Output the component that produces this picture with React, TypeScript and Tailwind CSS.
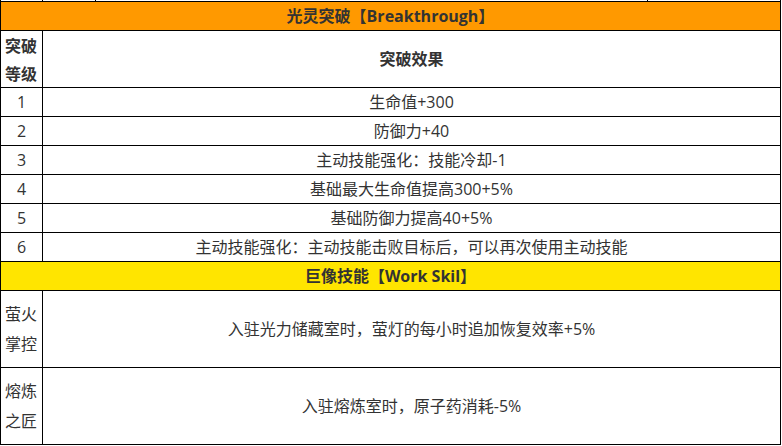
import React from 'react';

const font = { fontFamily: '"Open Sans", "Noto Sans CJK SC", sans-serif' };

const levels = [
  ['1', '生命值+300'],
  ['2', '防御力+40'],
  ['3', '主动技能强化：技能冷却-1'],
  ['4', '基础最大生命值提高300+5%'],
  ['5', '基础防御力提高40+5%'],
  ['6', '主动技能强化：主动技能击败目标后，可以再次使用主动技能'],
];

const skills = [
  ['萤火', '掌控', '入驻光力储藏室时，萤灯的每小时追加恢复效率+5%'],
  ['熔炼', '之匠', '入驻熔炼室时，原子药消耗-5%'],
];

export default function App() {
  return (
    <div className="w-[782px] h-[446px] bg-white text-[16px] text-[#333]" style={font}>
      {/* tail of the table above */}
      <div className="flex h-px">
        <div className="w-[42px] border-l border-black" />
        <div className="w-[53px] border-l border-black" />
        <div className="w-[552px] border-l border-black" />
        <div className="w-[134px] border-l border-r border-black" />
      </div>

      <div className="w-[781px] border border-black">
        <div className="h-[29px] flex items-center justify-center bg-[#ff9900] border-b border-black font-bold">
          光灵突破【Breakthrough】
        </div>

        <div className="h-[57px] flex border-b border-black font-bold">
          <div className="w-[42px] shrink-0 border-r border-black pl-[4px] pt-[1px] leading-[28px]">
            <div>突破</div>
            <div>等级</div>
          </div>
          <div className="flex-1 flex items-center justify-center">突破效果</div>
        </div>

        {levels.map(([lv, text]) => (
          <div key={lv} className="h-[29px] flex border-b border-black">
            <div className="w-[42px] shrink-0 border-r border-black flex items-center justify-center">{lv}</div>
            <div className="flex-1 flex items-center justify-center">{text}</div>
          </div>
        ))}

        <div className="h-[29px] flex items-center justify-center bg-[#ffe500] border-b border-black font-bold">
          巨像技能【Work Skil】
        </div>

        {skills.map(([a, b, text], i) => (
          <div key={a} className={`flex ${i === 0 ? 'h-[77px] border-b border-black' : 'h-[76px]'}`}>
            <div className="w-[42px] shrink-0 border-r border-black pl-[4px] flex flex-col justify-center leading-[30px]">
              <div>{a}</div>
              <div>{b}</div>
            </div>
            <div className="flex-1 flex items-center justify-center">{text}</div>
          </div>
        ))}
      </div>
    </div>
  );
}
